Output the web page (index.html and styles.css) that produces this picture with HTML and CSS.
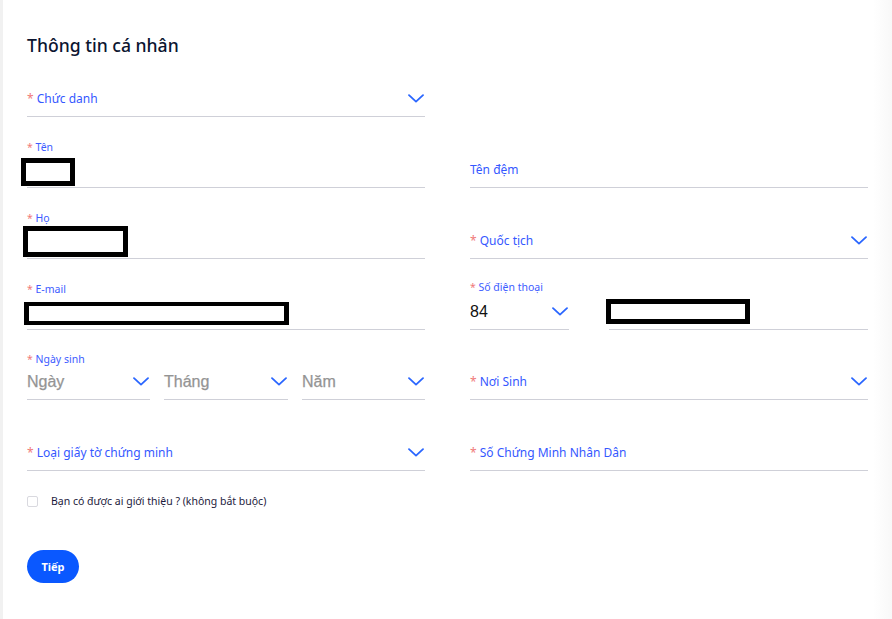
FILE: index.html
```html
<!DOCTYPE html>
<html lang="vi">
<head>
<meta charset="utf-8">
<title>Thông tin cá nhân</title>
<link rel="stylesheet" href="styles.css">
</head>
<body>
<div class="page">
  <h1 class="title">Thông tin cá nhân</h1>
  <div class="grid">
    <!-- Row 1 -->
    <div class="field">
      <div class="value">
        <span class="ph"><span class="req">*</span> Chức danh</span>
        <svg class="chev" viewBox="0 0 16 9"><path d="M1 1.2 8 7.6 15 1.2"/></svg>
      </div>
    </div>
    <div class="empty"></div>

    <!-- Row 2 -->
    <div class="field">
      <div class="small"><span class="req">*</span> Tên</div>
      <div class="value">
        <span class="redact r-ten"></span>
      </div>
    </div>
    <div class="field">
      <div class="value">
        <span class="ph">Tên đệm</span>
      </div>
    </div>

    <!-- Row 3 -->
    <div class="field">
      <div class="small"><span class="req">*</span> Họ</div>
      <div class="value">
        <span class="redact r-ho"></span>
      </div>
    </div>
    <div class="field">
      <div class="value">
        <span class="ph"><span class="req">*</span> Quốc tịch</span>
        <svg class="chev" viewBox="0 0 16 9"><path d="M1 1.2 8 7.6 15 1.2"/></svg>
      </div>
    </div>

    <!-- Row 4 -->
    <div class="field">
      <div class="small"><span class="req">*</span> E-mail</div>
      <div class="value">
        <span class="redact r-mail"></span>
      </div>
    </div>
    <div class="phone">
      <div class="field code">
        <div class="small up"><span class="req">*</span> Số điện thoại</div>
        <div class="value">
          <span class="val">84</span>
          <svg class="chev" viewBox="0 0 16 9"><path d="M1 1.2 8 7.6 15 1.2"/></svg>
        </div>
      </div>
      <div class="field num">
        <div class="value">
          <span class="redact r-phone"></span>
        </div>
      </div>
    </div>

    <!-- Row 5 -->
    <div class="dob">
      <div class="small dob-label"><span class="req">*</span> Ngày sinh</div>
      <div class="dob-row">
        <div class="field sub">
          <div class="value">
            <span class="gray">Ngày</span>
            <svg class="chev" viewBox="0 0 16 9"><path d="M1 1.2 8 7.6 15 1.2"/></svg>
          </div>
        </div>
        <div class="field sub">
          <div class="value">
            <span class="gray">Tháng</span>
            <svg class="chev" viewBox="0 0 16 9"><path d="M1 1.2 8 7.6 15 1.2"/></svg>
          </div>
        </div>
        <div class="field sub">
          <div class="value">
            <span class="gray">Năm</span>
            <svg class="chev" viewBox="0 0 16 9"><path d="M1 1.2 8 7.6 15 1.2"/></svg>
          </div>
        </div>
      </div>
    </div>
    <div class="field">
      <div class="value">
        <span class="ph"><span class="req">*</span> Nơi Sinh</span>
        <svg class="chev" viewBox="0 0 16 9"><path d="M1 1.2 8 7.6 15 1.2"/></svg>
      </div>
    </div>

    <!-- Row 6 -->
    <div class="field">
      <div class="value">
        <span class="ph"><span class="req">*</span> Loại giấy tờ chứng minh</span>
        <svg class="chev" viewBox="0 0 16 9"><path d="M1 1.2 8 7.6 15 1.2"/></svg>
      </div>
    </div>
    <div class="field">
      <div class="value">
        <span class="ph"><span class="req">*</span> Số Chứng Minh Nhân Dân</span>
      </div>
    </div>
  </div>

  <label class="check">
    <span class="box"></span>
    <span class="check-text">Bạn có được ai giới thiệu ? (không bắt buộc)</span>
  </label>

  <button class="btn" type="button">Tiếp</button>
</div>
</body>
</html>
```

FILE: styles.css
```css
* { box-sizing: border-box; }

html, body {
  margin: 0;
  padding: 0;
  background: #ffffff;
}

body {
  font-family: "Noto Sans", "Open Sans", sans-serif;
  width: 892px;
  height: 619px;
  overflow: hidden;
}

.page {
  height: 619px;
  border-left: 3px solid #f1f1f1;
  padding: 33px 0 0 24px;
  background: linear-gradient(to right, #ffffff 0, #ffffff 870px, #f7f7f7 892px);
}

.title {
  margin: 0 0 10px;
  font-size: 17.6px;
  line-height: 24px;
  font-weight: 500;
  color: #0b1530;
}

.grid {
  display: grid;
  grid-template-columns: 398px 398px;
  grid-template-rows: 50px 50px 50px 50px 49px 50px;
  column-gap: 45px;
  row-gap: 21px;
}

.field {
  height: 100%;
  display: flex;
  flex-direction: column;
  justify-content: flex-end;
  border-bottom: 1px solid #cfd0d8;
}

.small {
  font-size: 10.5px;
  line-height: 12px;
  color: #3d5cff;
  margin-bottom: 0;
}

.small.up {
  margin-bottom: 2px;
}

.req {
  color: #f07a7a;
}

.value {
  height: 34px;
  display: flex;
  align-items: center;
  justify-content: space-between;
  padding-bottom: 2px;
}

.ph {
  font-size: 12px;
  color: #3558ff;
  white-space: nowrap;
}

.chev {
  width: 16px;
  height: 9px;
  margin-right: 1px;
  flex: none;
}

.chev path {
  fill: none;
  stroke: #2a66ff;
  stroke-width: 1.8;
  stroke-linecap: round;
  stroke-linejoin: round;
}

.redact {
  display: block;
  border: 5px solid #000;
  background: #fff;
  align-self: flex-end;
}

.r-ten { width: 54px; height: 28px; margin-left: -6px; margin-bottom: -1px; }
.r-ho { width: 105px; height: 31px; margin-left: -4px; margin-bottom: -1px; }
.r-mail { width: 265px; height: 23px; margin-left: -3px; margin-bottom: 2px; border-width: 4px 5px; }
.r-phone { width: 144px; height: 25px; margin-left: -3px; margin-bottom: 3px; }

.phone {
  display: flex;
  gap: 40px;
}

.phone .code { width: 99px; flex: none; }
.phone .num { flex: 1; }

.val {
  font-family: "Liberation Sans", Arial, sans-serif;
  font-size: 16px;
  color: #111;
  margin-top: 2px;
}

.gray {
  font-family: "Liberation Sans", Arial, sans-serif;
  font-size: 16px;
  color: #949494;
  -webkit-text-stroke: 0.25px #949494;
  margin-top: 2px;
}

.dob {
  height: 100%;
  display: flex;
  flex-direction: column;
  justify-content: flex-end;
}

.dob-label {
  margin-bottom: 0;
}

.dob-row {
  display: grid;
  grid-template-columns: 123px 124px 123px;
  column-gap: 14px;
}

.dob-row .field {
  height: auto;
}

.check {
  display: flex;
  align-items: center;
  margin-top: 24px;
  height: 12px;
}

.box {
  width: 11px;
  height: 11px;
  border: 1px solid #d9d9df;
  border-radius: 2px;
  margin-right: 13px;
}

.check-text {
  font-size: 10.5px;
  color: #1c1a3c;
}

.btn {
  display: block;
  margin-top: 43px;
  width: 52px;
  height: 33px;
  border: none;
  border-radius: 17px;
  background: #0a58ff;
  color: #fff;
  font-family: "Noto Sans", sans-serif;
  font-size: 11px;
  font-weight: 700;
  padding: 0;
}
```
